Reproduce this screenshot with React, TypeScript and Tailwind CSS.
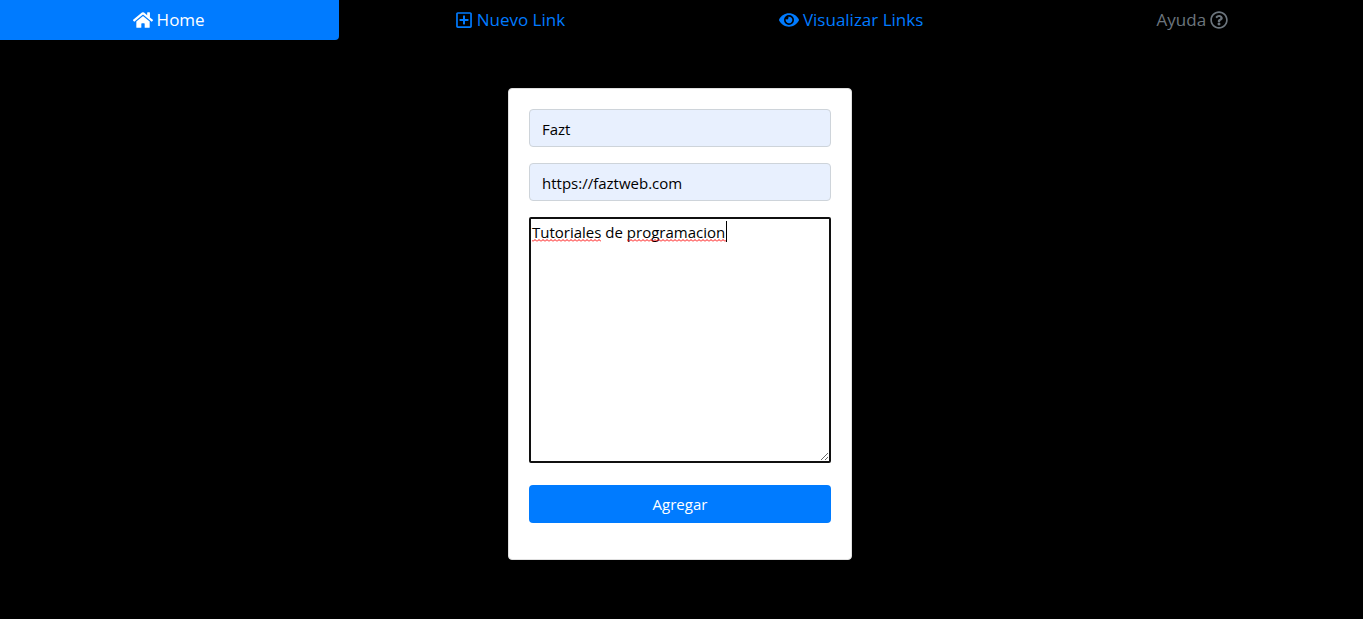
import { FaHome, FaRegPlusSquare, FaEye, FaRegQuestionCircle } from "react-icons/fa";

const linkBase =
  "flex h-10 items-center justify-center gap-1 rounded-br-sm pr-[2px] text-[17px] leading-6";

const fieldClass =
  "block h-[38px] w-full rounded border border-[#ced4da] bg-[#e8f0fe] px-3 pt-[2px] text-[15px] leading-6 text-black outline-none";

export default function App() {
  return (
    <div className="min-h-screen bg-black font-['Open_Sans',sans-serif]">
      <nav aria-label="Principal">
        <ul className="grid grid-cols-4 gap-[2px]">
          <li>
            <a href="#home" aria-current="page" className={`${linkBase} bg-[#007bff] text-white`}>
              <FaHome className="size-5" aria-hidden="true" />
              Home
            </a>
          </li>
          <li>
            <a href="#nuevo" className={`${linkBase} text-[#007bff]`}>
              <FaRegPlusSquare className="size-[18px]" aria-hidden="true" />
              Nuevo Link
            </a>
          </li>
          <li>
            <a href="#links" className={`${linkBase} text-[#007bff]`}>
              <FaEye className="size-5" aria-hidden="true" />
              Visualizar Links
            </a>
          </li>
          <li>
            <a href="#ayuda" className={`${linkBase} text-[#6c757d]`}>
              Ayuda
              <FaRegQuestionCircle className="size-[18px]" aria-hidden="true" />
            </a>
          </li>
        </ul>
      </nav>

      <main className="flex justify-center pt-12 pr-[3px]">
        <form
          className="w-full max-w-[344px] rounded border border-[#dfdfdf] bg-white px-5 pt-5 pb-9"
          onSubmit={(e) => e.preventDefault()}
        >
          <input aria-label="Título" type="text" defaultValue="Fazt" className={fieldClass} />
          <input
            aria-label="URL"
            type="url"
            defaultValue="https://faztweb.com"
            className={`${fieldClass} mt-4`}
          />
          <div className="relative mt-4">
            <textarea
              aria-label="Descripción"
              defaultValue="Tutoriales de programacion"
              spellCheck={false}
              className="block h-[246px] w-full resize rounded-xs border-2 border-[#101010] bg-white px-px py-[2px] text-[15px] leading-[22px] text-black outline-none"
            />
            <svg
              className="pointer-events-none absolute top-0 left-0 h-8 w-52"
              viewBox="0 0 208 32"
              aria-hidden="true"
            >
              <defs>
                <pattern id="wave" width="4" height="3" patternUnits="userSpaceOnUse" y="22">
                  <path d="M-1 3 L0 2.5 L2 .5 L4 2.5 L5 3" fill="none" stroke="#ff0000" strokeWidth="1" />
                </pattern>
              </defs>
              <rect x="3" y="22" width="69" height="3" fill="url(#wave)" />
              <rect x="98" y="22" width="99" height="3" fill="url(#wave)" />
              <rect x="197" y="4" width="1" height="21" fill="#000" />
            </svg>
          </div>
          <button
            type="submit"
            className="mt-[22px] block h-[38px] w-full cursor-pointer rounded bg-[#007bff] text-[15px] leading-6 text-white"
          >
            Agregar
          </button>
        </form>
      </main>
    </div>
  );
}
